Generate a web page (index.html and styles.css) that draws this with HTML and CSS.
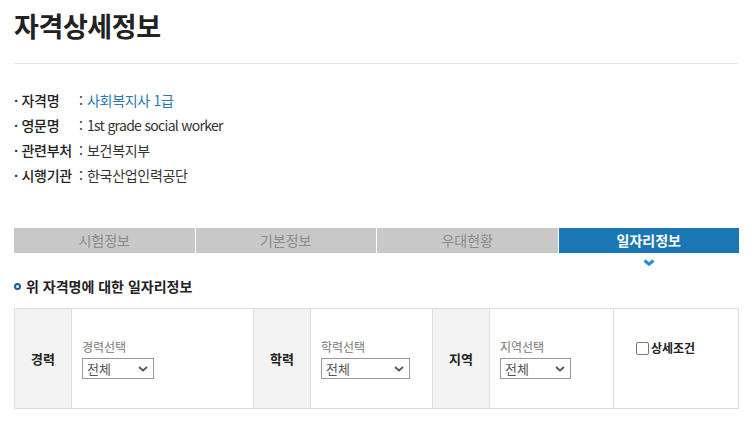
FILE: index.html
```
<!DOCTYPE html>
<html lang="ko">
<head>
<meta charset="utf-8">
<title>자격상세정보</title>
<link rel="stylesheet" href="styles.css">
</head>
<body>
<div class="page">
  <h1 class="title">자격상세정보</h1>
  <div class="rule"></div>
  <ul class="info">
    <li><span class="lbl">· 자격명</span><span class="sep">:</span><a class="val link" href="#">사회복지사 1급</a></li>
    <li><span class="lbl">· 영문명</span><span class="sep">:</span><span class="val en">1st grade social worker</span></li>
    <li><span class="lbl">· 관련부처</span><span class="sep">:</span><span class="val">보건복지부</span></li>
    <li><span class="lbl">· 시행기관</span><span class="sep">:</span><span class="val">한국산업인력공단</span></li>
  </ul>
  <div class="tabs">
    <div class="tab">시험정보</div>
    <div class="tab">기본정보</div>
    <div class="tab">우대현황</div>
    <div class="tab active">일자리정보
      <svg class="chev" width="12" height="7" viewBox="0 0 12 7"><polyline points="1.5,1.5 6,5.2 10.5,1.5" fill="none" stroke="#2a8ad4" stroke-width="3"/></svg>
    </div>
  </div>
  <h2 class="sub"><span class="ring"></span>위 자격명에 대한 일자리정보</h2>
  <div class="filter">
    <div class="th">경력</div>
    <div class="td">
      <div class="cap">경력선택</div>
      <div class="sel w72"><span>전체</span><svg width="10" height="6" viewBox="0 0 10 6"><polyline points="1,1 5,4.5 9,1" fill="none" stroke="#555" stroke-width="1.8"/></svg></div>
    </div>
    <div class="th">학력</div>
    <div class="td">
      <div class="cap">학력선택</div>
      <div class="sel w89"><span>전체</span><svg width="10" height="6" viewBox="0 0 10 6"><polyline points="1,1 5,4.5 9,1" fill="none" stroke="#555" stroke-width="1.8"/></svg></div>
    </div>
    <div class="th">지역</div>
    <div class="td">
      <div class="cap">지역선택</div>
      <div class="sel w71"><span>전체</span><svg width="10" height="6" viewBox="0 0 10 6"><polyline points="1,1 5,4.5 9,1" fill="none" stroke="#555" stroke-width="1.8"/></svg></div>
    </div>
    <div class="td last">
      <label class="chk"><span class="box"></span>상세조건</label>
    </div>
  </div>
</div>
</body>
</html>
```

FILE: styles.css
```
* { box-sizing: border-box; }
html, body { margin: 0; padding: 0; background: #fff; }
body {
  font-family: "Noto Sans CJK KR", "Noto Sans", sans-serif;
  color: #333;
}
.page {
  width: 725px;
  margin-left: 14px;
}
.title {
  margin: 10px 0 0;
  font-size: 27px;
  line-height: 32px;
  font-weight: 700;
  color: #222;
  letter-spacing: -0.4px;
}
.rule {
  margin-top: 21px;
  height: 1px;
  background: #e6e6e6;
}
.info {
  list-style: none;
  margin: 24px 0 0;
  padding: 0;
  font-size: 14px;
  line-height: 25px;
}
.info li { display: flex; }
.lbl { width: 65px; color: #222; letter-spacing: -0.3px; font-weight: 500; }
.sep { width: 8px; color: #333; }
.val { color: #333; letter-spacing: -0.3px; }
.val.en { letter-spacing: -0.7px; }
.link { color: #2a78b5; text-decoration: none; }
.tabs {
  margin-top: 40px;
  display: flex;
  gap: 1px;
}
.tab {
  flex: 1;
  height: 25px;
  line-height: 25px;
  background: #c8c8c8;
  color: #8a8a8a;
  text-align: center;
  font-size: 14px;
  position: relative;
}
.tab.active {
  background: #1b77b3;
  color: #fff;
  font-weight: 700;
}
.chev {
  position: absolute;
  left: 50%;
  margin-left: -6px;
  top: 31px;
  display: block;
}
.sub {
  margin: 23px 0 0;
  font-size: 14px;
  line-height: 20px;
  font-weight: 700;
  color: #222;
  display: flex;
  align-items: center;
}
.ring {
  width: 7px;
  height: 7px;
  border: 2px solid #1a5f98;
  border-radius: 50%;
  margin-right: 5px;
}
.filter {
  margin-top: 12px;
  display: grid;
  grid-template-columns: 56px 182px 57px 122px 57px 124px 1fr;
  border: 1px solid #dedede;
  height: 101px;
}
.th, .td { border-left: 1px solid #dedede; }
.th:first-child { border-left: 0; }
.th {
  background: #f3f3f3;
  display: flex;
  align-items: center;
  justify-content: center;
  font-size: 13px;
  font-weight: 700;
  color: #222;
}
.td {
  display: flex;
  flex-direction: column;
  justify-content: center;
  padding-left: 10px;
  padding-top: 1px;
}
.cap {
  font-size: 12px;
  line-height: 16px;
  color: #777;
  margin-bottom: 3px;
}
.sel {
  height: 21px;
  border: 1px solid #999;
  display: flex;
  align-items: center;
  justify-content: space-between;
  padding: 0 5px 0 4px;
  font-size: 13px;
  color: #555;
  background: #fff;
}
.w72 { width: 72px; }
.w89 { width: 89px; }
.w71 { width: 71px; }
.td.last {
  justify-content: flex-start;
  padding-left: 22px;
  padding-top: 31px;
}
.chk {
  display: flex;
  align-items: center;
  font-size: 12px;
  font-weight: 700;
  color: #222;
  line-height: 16px;
}
.box {
  width: 13px;
  height: 13px;
  border: 1px solid #767676;
  border-radius: 2px;
  margin-right: 2px;
  background: #fff;
}
```
